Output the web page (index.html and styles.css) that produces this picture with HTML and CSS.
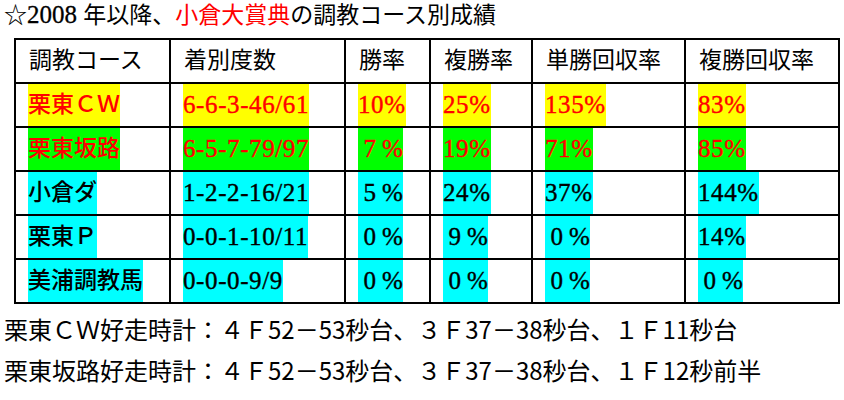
FILE: index.html
```html
<!DOCTYPE html>
<html lang="ja">
<head>
<meta charset="utf-8">
<title>小倉大賞典 調教コース別成績</title>
<link rel="stylesheet" href="styles.css">
</head>
<body>
<h1 class="title">☆<span class="year">2008 </span>年以降、<span class="red">小倉大賞典</span>の調教コース別成績</h1>
<table class="stats">
  <colgroup>
    <col class="c1"><col class="c2"><col class="c3"><col class="c4"><col class="c5"><col class="c6">
  </colgroup>
  <thead>
    <tr>
      <th>調教コース</th><th>着別度数</th><th>勝率</th><th>複勝率</th><th>単勝回収率</th><th>複勝回収率</th>
    </tr>
  </thead>
  <tbody>
    <tr class="r-yellow">
      <td class="name"><span class="hl">栗東ＣＷ</span></td>
      <td><span class="hl">6-6-3-46/61</span></td>
      <td><span class="hl">10%</span></td>
      <td><span class="hl">25%</span></td>
      <td><span class="hl">135%</span></td>
      <td><span class="hl">83%</span></td>
    </tr>
    <tr class="r-green">
      <td class="name"><span class="hl">栗東坂路</span></td>
      <td><span class="hl">6-5-7-79/97</span></td>
      <td><span class="hl"><span class="fw">7</span>%</span></td>
      <td><span class="hl">19%</span></td>
      <td><span class="hl">71%</span></td>
      <td><span class="hl">85%</span></td>
    </tr>
    <tr class="r-cyan">
      <td class="name"><span class="hl">小倉ダ</span></td>
      <td><span class="hl">1-2-2-16/21</span></td>
      <td><span class="hl"><span class="fw">5</span>%</span></td>
      <td><span class="hl">24%</span></td>
      <td><span class="hl">37%</span></td>
      <td><span class="hl">144%</span></td>
    </tr>
    <tr class="r-cyan">
      <td class="name"><span class="hl">栗東Ｐ</span></td>
      <td><span class="hl">0-0-1-10/11</span></td>
      <td><span class="hl"><span class="fw">0</span>%</span></td>
      <td><span class="hl"><span class="fw">9</span>%</span></td>
      <td><span class="hl"><span class="fw">0</span>%</span></td>
      <td><span class="hl">14%</span></td>
    </tr>
    <tr class="r-cyan">
      <td class="name"><span class="hl">美浦調教馬</span></td>
      <td><span class="hl">0-0-0-9/9</span></td>
      <td><span class="hl"><span class="fw">0</span>%</span></td>
      <td><span class="hl"><span class="fw">0</span>%</span></td>
      <td><span class="hl"><span class="fw">0</span>%</span></td>
      <td><span class="hl"><span class="fw">0</span>%</span></td>
    </tr>
  </tbody>
</table>
<div class="notes">
  <p class="note">栗東ＣＷ好走時計：４Ｆ52－53秒台、３Ｆ37－38秒台、１Ｆ11秒台</p>
  <p class="note">栗東坂路好走時計：４Ｆ52－53秒台、３Ｆ37－38秒台、１Ｆ12秒前半</p>
</div>
</body>
</html>
```

FILE: styles.css
```css
html, body {
  margin: 0;
  padding: 0;
  background: #ffffff;
}

body {
  padding: 0 4px;
  font-family: "Liberation Serif", "Noto Sans CJK JP", serif;
  color: #000000;
}

.title {
  margin: 0;
  font-size: 23px;
  font-weight: normal;
  line-height: 30px;
  height: 30px;
}

.title .year {
  font-size: 25px;
  -webkit-text-stroke: 0.3px currentColor;
}

.red {
  color: #ff0000;
}

.stats {
  margin: 8px 0 0 10px;
  border-collapse: collapse;
  table-layout: fixed;
  width: 826px;
  font-size: 23px;
}

.c1 { width: 155px; }
.c2 { width: 175px; }
.c3 { width: 85px; }
.c4 { width: 102px; }
.c5 { width: 153px; }
.c6 { width: 154px; }

.stats th,
.stats td {
  border: 2px solid #000000;
  padding: 0 0 0 12px;
  height: 42px;
  text-align: left;
  white-space: nowrap;
  overflow: hidden;
}

.stats th {
  font-weight: normal;
  padding-left: 13px;
  line-height: 42px;
}

.stats td {
  vertical-align: top;
  font-size: 25px;
  font-weight: normal;
  letter-spacing: 0.6px;
  -webkit-text-stroke: 0.4px currentColor;
}

.stats td.name {
  font-size: 23px;
  font-weight: 500;
  letter-spacing: 0;
  -webkit-text-stroke: 0;
}

.hl {
  display: inline-block;
  height: 42px;
  line-height: 42px;
  vertical-align: top;
}

.fw {
  display: inline-block;
  width: 24px;
  text-align: center;
}

.r-yellow .hl {
  background: #ffff00;
  color: #ff0000;
}

.r-green .hl {
  background: #00ff00;
  color: #ff0000;
}

.r-cyan .hl {
  background: #00ffff;
  color: #000000;
}

.notes {
  margin-top: 4px;
}

.note {
  margin: 0;
  font-family: "Noto Sans CJK JP", sans-serif;
  font-size: 24px;
  line-height: 41px;
  white-space: nowrap;
}
```
